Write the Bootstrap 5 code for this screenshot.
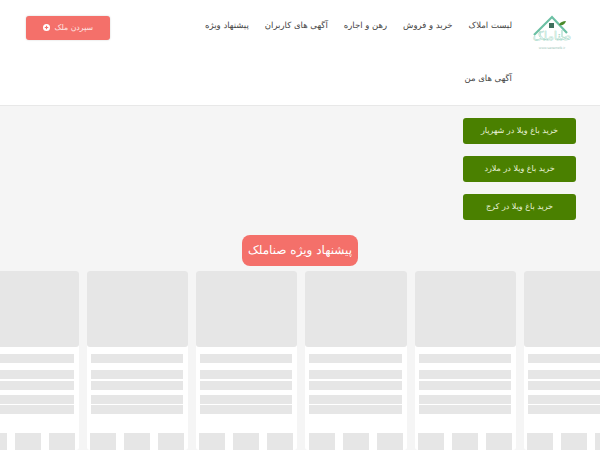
<!DOCTYPE html>
<html lang="fa" dir="rtl">

<head>
    <meta charset="UTF-8">
    <meta name="viewport" content="width=device-width, initial-scale=1.0">
    <title>صناملک</title>
    <link href="https://cdn.jsdelivr.net/npm/bootstrap@5.3.0/dist/css/bootstrap.min.css" rel="stylesheet">
    <style>
        html, body {
            height: 450px;
            overflow: hidden;
        }

        body {
            background-color: #f5f5f5;
            font-family: "DejaVu Sans", "Liberation Sans", sans-serif;
            text-rendering: geometricPrecision;
        }

        .top-bar {
            background-color: #fff;
            border-bottom: 1px solid #e8e8e8;
            height: 106px;
            padding: 0 21px 0 26px;
        }

        .brand-logo {
            width: 51px;
            height: 38px;
            margin-top: 13px;
            margin-left: 16px;
        }

        .menu-links {
            width: 335px;
            font-size: 8.5px;
        }

        .menu-links a {
            color: #444;
            line-height: 53px;
            margin-left: 16px;
            text-decoration: none;
            white-space: nowrap;
        }

        .add-btn {
            background-color: #f4706a;
            border: 0;
            border-radius: 3px;
            box-shadow: 0 0 2px rgba(0, 0, 0, .2);
            color: #fde6e4;
            font-size: 7.8px;
            height: 24px;
            margin-top: 16px;
            width: 84px;
        }

        .add-btn svg {
            margin-right: 2px;
            vertical-align: -1px;
        }

        .green-links {
            padding: 12px 24px 0 0;
            width: 137px;
        }

        .green-links .btn {
            background-color: #4a8000;
            border: 0;
            border-radius: 3px;
            color: #e8f2d8;
            font-size: 8px;
            height: 26px;
            line-height: 26px;
            padding: 0;
            white-space: nowrap;
        }

        .offer-title {
            background-color: #f4706a;
            border-radius: 8px;
            color: #fff;
            font-size: 12px;
            font-weight: 400;
            height: 31px;
            line-height: 30px;
            margin: 15px 0 5px;
            width: 116px;
        }

        .skeleton-row {
            gap: 8px;
            padding-left: 2.5px;
        }

        .skeleton-card {
            background-color: #fff;
            flex: 0 0 101.33px;
            height: 179px;
            border-radius: 3px;
        }

        .skeleton-pic {
            background-color: #e6e6e6;
            border-radius: 3px;
            height: 76px;
        }

        .skeleton-lines {
            padding: 7px 5px 0 4px;
        }

        .skeleton-lines div {
            background-color: #e6e6e6;
            height: 9px;
            margin-bottom: 1px;
        }

        .skeleton-lines .gap-after {
            margin-bottom: 7px;
        }

        .skeleton-lines .gap-mid {
            margin-bottom: 2px;
        }

        .skeleton-lines .gap-small {
            margin-bottom: 5px;
        }

        .skeleton-thumbs {
            gap: 8px;
            margin-top: 19px;
            padding: 0 4px 0 3px;
        }

        .skeleton-thumbs span {
            background-color: #e6e6e6;
            flex: 0 0 26px;
            height: 26px;
        }
    </style>
</head>

<body>
    <nav class="top-bar d-flex align-items-start justify-content-between">
        <div class="d-flex align-items-start">
            <svg class="brand-logo" viewBox="0 0 51 38">
                <path d="M6 22 24 4l15 16" fill="none" stroke="#6cc0a4" stroke-width="2.2"/>
                <path d="M12 18v6M34 17v7" stroke="#a8dccb" stroke-width="1.2"/>
                <path d="M21 10h5v5h-5z" fill="#3f6f5c"/>
                <path d="M31 12c1-3 4-4 7-4-1 3-3 5-7 4z" fill="#4a8a2a"/>
                <text x="24" y="27" text-anchor="middle" font-size="12" fill="#fff" stroke="#8fd0bb" stroke-width=".4" font-family="DejaVu Sans">صناملک</text>
                <text x="24" y="36" text-anchor="middle" font-size="3.5" fill="#9cc4b6" font-family="Liberation Sans" direction="ltr">www.sanamelk.ir</text>
            </svg>
            <div class="menu-links d-flex flex-wrap">
                <a href="#">لیست املاک</a>
                <a href="#">خرید و فروش</a>
                <a href="#">رهن و اجاره</a>
                <a href="#">آگهی های کاربران</a>
                <a href="#">پیشنهاد ویژه</a>
                <a href="#">آگهی های من</a>
            </div>
        </div>
        <button type="button" class="btn add-btn p-0">سپردن ملک
            <svg width="7" height="7" viewBox="0 0 8 8"><circle cx="4" cy="4" r="4" fill="#fff"/><path d="M4 2v4M2 4h4" stroke="#f4706a" stroke-width="1.3"/></svg>
        </button>
    </nav>

    <div class="green-links d-flex flex-column gap-2">
        <a href="#" class="btn">خرید باغ ویلا در شهریار</a>
        <a href="#" class="btn mt-1">خرید باغ ویلا در ملارد</a>
        <a href="#" class="btn mt-1">خرید باغ ویلا در کرج</a>
    </div>

    <div class="d-flex justify-content-center">
        <h2 class="offer-title text-center">پیشنهاد ویژه صناملک</h2>
    </div>

    <div class="skeleton-row d-flex justify-content-center" id="skeletons"></div>

    <script>
        // placeholder cards, all the same
        const holder = document.getElementById('skeletons');
        for (let i = 0; i < 6; i++) {
            const card = document.createElement('div');
            card.className = 'skeleton-card';
            card.innerHTML = `
                <div class="skeleton-pic"></div>
                <div class="skeleton-lines">
                    <div class="gap-after"></div>
                    <div class="gap-mid"></div>
                    <div class="gap-small"></div>
                    <div></div>
                    <div></div>
                </div>
                <div class="skeleton-thumbs d-flex"><span></span><span></span><span></span></div>`;
            holder.appendChild(card);
        }
    </script>
    <script src="https://cdn.jsdelivr.net/npm/bootstrap@5.3.0/dist/js/bootstrap.bundle.min.js"></script>
</body>

</html>
